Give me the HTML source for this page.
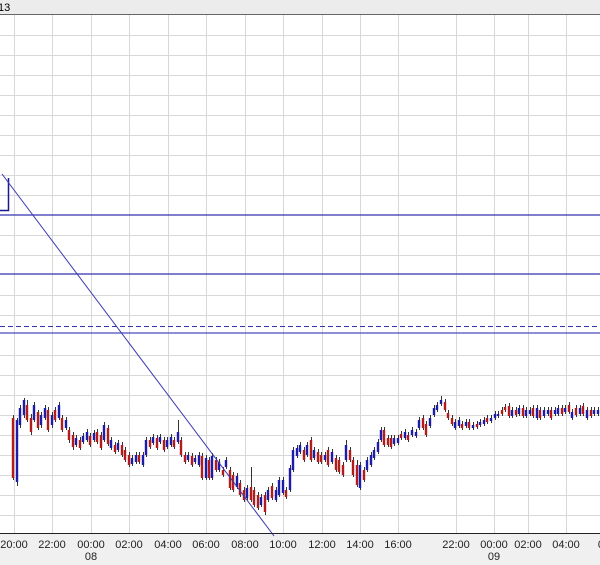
<!DOCTYPE html><html><head><style>
body{margin:0;width:600px;height:565px;overflow:hidden;background:#fff;font-family:"Liberation Sans",sans-serif}
</style></head><body>
<svg width="600" height="565" xmlns="http://www.w3.org/2000/svg" style="position:absolute;left:0;top:0">
<rect x="0" y="0" width="600" height="14" fill="#ececec"/>
<line x1="0" y1="14.5" x2="600" y2="14.5" stroke="#666"/>
<text x="-2" y="11" font-size="11" fill="#000">13</text>
<rect x="0" y="534" width="600" height="31" fill="#f0f0f0"/>
<path stroke="#d8d8d8" stroke-width="1" fill="none" d="M0 35.5H600M0 55.5H600M0 75.5H600M0 95.5H600M0 115.5H600M0 135.5H600M0 155.5H600M0 175.5H600M0 195.5H600M0 235.5H600M0 255.5H600M0 295.5H600M0 315.5H600M0 355.5H600M0 375.5H600M0 395.5H600M0 415.5H600M0 435.5H600M0 455.5H600M0 475.5H600M0 495.5H600M0 515.5H600
M14.5 15V533M52.5 15V533M91.5 15V533M129.5 15V533M168.5 15V533M206.5 15V533M245.5 15V533M283.5 15V533M322.5 15V533M360.5 15V533M398.5 15V533M456.5 15V533M494.5 15V533M528.5 15V533M566.5 15V533"/>
<path stroke="#333" stroke-width="1" fill="none" d="M13.5 415V480M17.5 418V486M20.5 405V428M24.5 398V418M27.5 400V422M31.5 414V435M34.5 402V422M38.5 410V430M41.5 412V428M45.5 405V420M48.5 407V432M52.5 412V428M55.5 407V422M59.5 402V420M62.5 415V432M66.5 417V430M69.5 427V443M73.5 432V450M76.5 435V447M80.5 437V450M83.5 433V444M87.5 429V442M90.5 433V447M94.5 430V442M97.5 429V444M101.5 432V450M104.5 422V442M108.5 425V446M111.5 437V450M115.5 442V454M118.5 440V452M122.5 442V457M125.5 447V462M129.5 452V467M132.5 455V466M136.5 452V464M139.5 452V464M143.5 452V467M146.5 437V457M150.5 437V449M153.5 434V445M157.5 435V450M160.5 434V444M164.5 437V452M167.5 437V449M171.5 434V447M174.5 437V449M178.5 420V444M181.5 437V457M185.5 452V464M188.5 452V462M192.5 453V467M195.5 455V464M199.5 452V467M202.5 453V480M206.5 455V480M209.5 457V480M212.5 453V480M216.5 457V472M219.5 459V472M223.5 467V477M226.5 457V469M230.5 467V490M233.5 472V492M237.5 473V489M240.5 480V497M244.5 487V502M247.5 485V500M251.5 467V502M254.5 487V507M258.5 492V510M261.5 494V507M265.5 492V515M268.5 487V502M272.5 483V500M276.5 487V502M279.5 477V497M283.5 477V495M286.5 487V499M290.5 465V492M293.5 447V472M297.5 445V458M300.5 442V454M304.5 447V462M307.5 442V457M311.5 437V462M314.5 447V460M318.5 449V464M321.5 452V464M325.5 452V462M328.5 447V467M332.5 449V464M336.5 455V472M339.5 457V474M343.5 462V477M346.5 440V462M350.5 447V462M353.5 457V477M357.5 460V487M360.5 462V490M364.5 467V482M367.5 457V472M371.5 452V467M374.5 447V460M378.5 439V454M381.5 427V442M384.5 427V447M388.5 435V447M391.5 435V449M394.5 435V446M398.5 435V445M401.5 431V440M405.5 429V440M408.5 432V442M412.5 427V437M416.5 429V438M419.5 417V430M423.5 415V430M426.5 421V437M430.5 415V428M434.5 405V417M437.5 402V412M441.5 396V406M445.5 399V412M448.5 410V420M452.5 415V426M455.5 419V430M459.5 417V428M462.5 421V430M466.5 419V428M469.5 419V430M473.5 422V430M477.5 421V429M480.5 419V427M484.5 417V426M487.5 415V424M491.5 415V423M495.5 411V420M498.5 411V418M502.5 407V416M505.5 404V412M509.5 403V418M512.5 407V418M516.5 407V417M519.5 405V416M523.5 405V418M526.5 407V418M530.5 407V416M533.5 405V418M537.5 405V420M540.5 407V420M544.5 407V418M548.5 407V416M551.5 407V420M555.5 407V416M558.5 405V416M562.5 405V416M565.5 405V414M569.5 402V414M572.5 409V420M576.5 405V417M580.5 405V416M583.5 403V416M587.5 407V420M591.5 407V418M594.5 407V416M598.5 407V416"/>
<path stroke="#b01c1c" stroke-width="2.4" fill="none" d="M13 418V478M27 405V420M31 418V432M38 412V428M48 410V430M55 410V420M62 418V430M69 430V440M73 435V447M80 440V448M90 436V445M97 432V442M101 435V448M108 428V444M115 445V452M122 445V455M125 450V460M129 455V465M139 455V462M150 440V447M157 438V448M164 440V450M174 440V447M181 440V455M185 455V462M192 456V465M202 456V478M209 460V478M216 460V470M223 470V475M230 470V488M233 475V490M240 483V495M244 490V500M251 487V500M254 490V505M258 495V508M265 495V512M272 486V498M286 490V497M304 450V460M311 440V460M318 452V462M321 455V462M328 450V465M336 458V470M339 460V472M343 465V475M350 450V460M353 460V475M357 465V485M364 470V480M384 430V445M388 438V445M391 438V447M401 434V438M408 435V440M423 418V428M426 424V435M445 402V410M448 413V418M452 418V424M462 424V428M469 422V428M477 424V427M487 418V422M502 410V414M505 407V410M509 406V416M516 410V415M523 408V416M533 408V416M540 410V418M551 410V418M562 408V414M569 405V412M576 408V415M583 406V414M591 410V416"/>
<path stroke="#1c1ca8" stroke-width="2.4" fill="none" d="M17 420V482M20 408V425M24 400V415M34 405V420M41 415V425M45 408V418M52 415V425M59 405V418M66 420V428M76 438V445M83 436V442M87 432V440M94 433V440M104 425V440M111 440V448M118 443V450M132 458V464M136 455V462M143 455V465M146 440V455M153 437V443M160 437V442M167 440V447M171 437V445M178 432V442M188 455V460M195 458V462M199 455V465M206 458V478M212 456V478M219 462V470M226 460V467M237 476V487M247 488V498M261 497V505M268 490V500M276 490V500M279 480V495M283 480V493M290 468V490M293 450V470M297 448V456M300 445V452M307 445V455M314 450V458M325 455V460M332 452V462M346 445V460M360 465V488M367 460V470M371 455V465M374 450V458M378 442V452M381 430V440M394 438V444M398 438V443M405 432V438M412 430V435M416 432V436M419 420V428M430 418V426M434 408V415M437 405V410M441 400V404M455 422V428M459 420V426M466 422V426M473 425V428M480 422V425M484 420V424M491 418V421M495 414V418M498 414V416M512 410V416M519 408V414M526 410V416M530 410V414M537 408V418M544 410V416M548 410V414M555 410V414M558 408V414M565 408V412M572 412V418M580 408V414M587 410V418M594 410V414M598 410V414"/>
<line x1="0" y1="215" x2="600" y2="215" stroke="#3333b0" stroke-width="1.2"/>
<line x1="0" y1="274" x2="600" y2="274" stroke="#3333b0" stroke-width="1.2"/>
<line x1="0" y1="326.5" x2="600" y2="326.5" stroke="#3333b0" stroke-dasharray="5,3"/>
<line x1="0" y1="333" x2="600" y2="333" stroke="#4a4ac0" stroke-width="1.2"/>
<polyline points="0,210.5 8.5,210.5 8.5,178" fill="none" stroke="#1a1a90" stroke-width="1.5"/>
<line x1="2" y1="174" x2="274" y2="536" stroke="#3a3ab0" stroke-width="1"/>
<line x1="0" y1="533.5" x2="600" y2="533.5" stroke="#222"/>
<g font-size="11" fill="#222" text-anchor="middle">
<text x="14" y="548">20:00</text><text x="52" y="548">22:00</text><text x="91" y="548">00:00</text><text x="129" y="548">02:00</text><text x="168" y="548">04:00</text><text x="206" y="548">06:00</text><text x="245" y="548">08:00</text><text x="283" y="548">10:00</text><text x="322" y="548">12:00</text><text x="360" y="548">14:00</text><text x="398" y="548">16:00</text><text x="456" y="548">22:00</text><text x="494" y="548">00:00</text><text x="528" y="548">02:00</text><text x="566" y="548">04:00</text><text x="604" y="548">06</text>
<text x="91" y="560">08</text><text x="494" y="560">09</text>
</g>
</svg>
</body></html>
